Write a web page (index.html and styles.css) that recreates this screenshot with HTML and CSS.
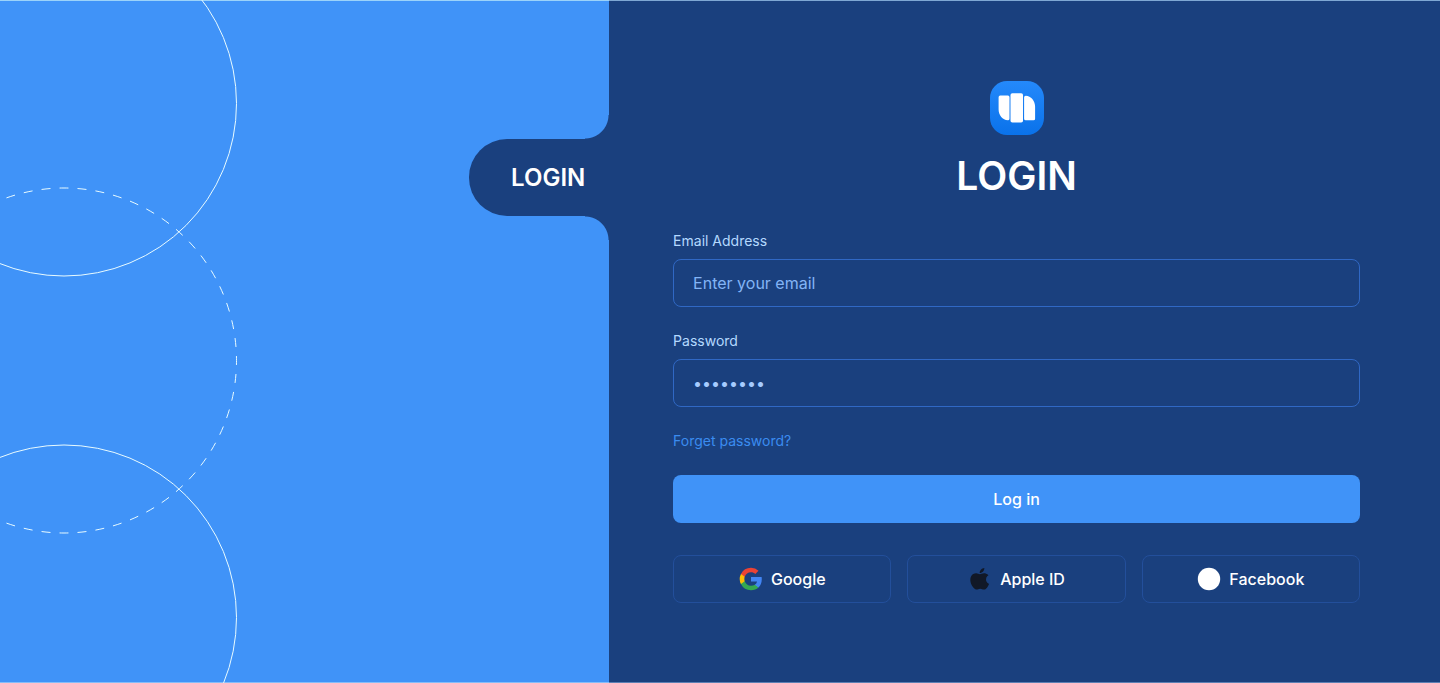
FILE: index.html
```html
<!DOCTYPE html>
<html lang="en">
<head>
  <meta charset="utf-8">
  <meta name="viewport" content="width=device-width, initial-scale=1">
  <title>Login</title>
  <link rel="stylesheet" href="styles.css">
</head>
<body>
  <div class="page">
    <aside class="art">
      <svg class="rings" viewBox="0 0 240 683" aria-hidden="true">
        <circle cx="64" cy="103.5" r="172.5"/>
        <circle cx="64" cy="360.5" r="172.5" pathLength="120" stroke-dasharray="1 1" stroke-dashoffset="0.5"/>
        <circle cx="64" cy="617.5" r="172.5"/>
      </svg>
      <div class="tab">LOGIN</div>
    </aside>
    <main class="panel">
      <header class="brand">
        <svg class="logo" viewBox="0 0 54 54" aria-hidden="true">
          <defs>
            <linearGradient id="tile" x1="0" y1="0" x2="0" y2="1">
              <stop offset="0" stop-color="#2489fb"/>
              <stop offset="1" stop-color="#0a72ea"/>
            </linearGradient>
          </defs>
          <rect width="54" height="54" rx="17" fill="url(#tile)"/>
          <path fill="#fff" d="M10.2 14.600h7.700a1.600 1.600 0 0 1 1.600 1.600v21.500a1.600 1.600 0 0 1-1.600 1.600C12.500 38.900 8.600 34.300 8.600 28.500V16.200a1.600 1.600 0 0 1 1.600-1.600z"/>
          <rect x="20.500" y="12.300" width="12.500" height="29.200" rx="1.800" fill="#fff"/>
          <path fill="#fff" d="M35.700 14.700c5.300.4 9.400 5 9.400 10.800v12.200a1.600 1.600 0 0 1-1.600 1.600h-7.800a1.600 1.600 0 0 1-1.600-1.600V16.300a1.600 1.600 0 0 1 1.600-1.600z"/>
        </svg>
        <h1 class="title">LOGIN</h1>
      </header>
      <form class="form">
        <div class="field">
          <label class="label" for="email">Email Address</label>
          <input class="input" id="email" type="email" placeholder="Enter your email">
        </div>
        <div class="field">
          <label class="label" for="password">Password</label>
          <input class="input input-password" id="password" type="password" placeholder="••••••••">
        </div>
        <a class="forgot" href="#">Forget password?</a>
        <button class="submit" type="submit">Log in</button>
        <div class="providers">
          <button class="provider" type="button">
            <svg class="icon" viewBox="-0.8 -0.8 25.6 25.6" aria-hidden="true">
              <path fill="#4285f4" d="M23.500 12.270c0-.82-.07-1.600-.2-2.360H12v4.650h6.450a5.520 5.520 0 0 1-2.390 3.620v3h3.870c2.260-2.090 3.570-5.160 3.570-8.910z"/>
              <path fill="#34a853" d="M12 24c3.240 0 5.950-1.070 7.930-2.910l-3.870-3c-1.070.72-2.440 1.150-4.060 1.150-3.130 0-5.780-2.110-6.720-4.950H1.280v3.100A11.990 11.990 0 0 0 12 24z"/>
              <path fill="#fbbc05" d="M5.280 14.290a7.200 7.200 0 0 1 0-4.580v-3.100h-4a12 12 0 0 0 0 10.780l4-3.100z"/>
              <path fill="#ea4335" d="M12 4.760c1.760 0 3.340.61 4.590 1.800l3.430-3.440A11.520 11.520 0 0 0 12 0 11.990 11.990 0 0 0 1.280 6.610l4 3.100C6.220 6.870 8.870 4.760 12 4.760z"/>
            </svg>
            Google
          </button>
          <button class="provider" type="button">
            <svg class="icon" viewBox="0 0 24 24" aria-hidden="true">
              <path fill="#111827" d="M12.152 6.896c-.948 0-2.415-1.078-3.960-1.040-2.040.027-3.910 1.183-4.961 3.014-2.117 3.675-.546 9.103 1.519 12.090 1.013 1.454 2.208 3.090 3.792 3.039 1.520-.065 2.090-.987 3.935-.987 1.831 0 2.350.987 3.960.948 1.637-.026 2.676-1.480 3.676-2.948 1.156-1.688 1.636-3.325 1.662-3.415-.039-.013-3.182-1.221-3.220-4.857-.026-3.040 2.480-4.494 2.597-4.559-1.429-2.090-3.623-2.324-4.390-2.376-2-.156-3.675 1.090-4.610 1.090zM15.530 3.830c.843-1.012 1.400-2.427 1.245-3.830-1.207.052-2.662.805-3.532 1.818-.78.896-1.454 2.338-1.273 3.714 1.338.104 2.715-.688 3.559-1.701" transform="translate(.2 1) scale(.96 .9)"/>
            </svg>
            Apple ID
          </button>
          <button class="provider" type="button">
            <svg class="icon" viewBox="0 0 24 24" aria-hidden="true">
              <circle cx="12" cy="12" r="11.200" fill="#fff"/>
            </svg>
            Facebook
          </button>
        </div>
      </form>
    </main>
  </div>
</body>
</html>
```
FILE: styles.css
```css
:root {
  --sky: #4093f8;
  --navy: #1a407e;
}

* {
  box-sizing: border-box;
}

body {
  margin: 0;
  background: var(--navy);
  color: #fff;
  font-family: Inter, "Liberation Sans", sans-serif;
}

.page {
  display: flex;
  min-height: 100vh;
  box-shadow: inset 0 1px #7fa8d4, inset 0 -1px #5c80b4;
}

.art {
  position: relative;
  flex: 0 0 42.3%;
  display: flex;
  flex-direction: column;
  align-items: flex-end;
  overflow: hidden;
  padding-top: 139px;
  background: var(--sky);
  box-shadow: inset 0 1px #9cd3fa, inset 0 -1px #86bdf8;
}

.rings {
  position: absolute;
  top: 0;
  left: 0;
  width: 240px;
  height: 683px;
  fill: none;
  stroke: #e8fbff;
  stroke-width: 1;
}

.tab {
  position: relative;
  width: 140px;
  padding: 24px 24px 24px 42px;
  border-radius: 38px 0 0 38px;
  background: var(--navy);
  font-size: 24px;
  font-weight: 600;
  line-height: 29px;
}

/* Concave corners joining the tab to the panel */
.tab::before,
.tab::after {
  content: "";
  position: absolute;
  right: 0;
  width: 24px;
  height: 24px;
}

.tab::before {
  bottom: 100%;
  background: radial-gradient(circle at 0 0, transparent 23px, var(--navy) 24px);
}

.tab::after {
  top: 100%;
  background: radial-gradient(circle at 0 100%, transparent 23px, var(--navy) 24px);
}

.panel {
  flex: 1;
  padding: 81px 80px 80px 64px;
}

.brand {
  display: flex;
  flex-direction: column;
  align-items: center;
  gap: 16px;
}

.logo {
  width: 54px;
  height: 54px;
}

.title {
  margin: 0;
  font-size: 39px;
  font-weight: 600;
  line-height: 50px;
}

.form {
  display: flex;
  flex-direction: column;
  padding-top: 32px;
}

.field {
  display: flex;
  flex-direction: column;
  gap: 10px;
  margin-bottom: 26px;
}

.label,
.forgot {
  font-size: 14px;
  line-height: 16px;
}

.label {
  color: #b4d9ff;
}

.input {
  height: 48px;
  padding: 0 19px;
  border: 1px solid #3068c4;
  border-radius: 8px;
  background: transparent;
  color: #a6ccff;
  font: inherit;
  font-size: 16px;
}

.input::placeholder {
  color: #83b4f6;
  opacity: 1;
}

.input-password::placeholder {
  color: #a6ccff;
}

.forgot {
  align-self: flex-start;
  color: #3b8cf0;
  text-decoration: none;
}

.submit,
.provider {
  height: 48px;
  border-radius: 8px;
  color: #fff;
  font: inherit;
  font-size: 16px;
  font-weight: 500;
}

.submit {
  margin: 26px 0 32px;
  border: 0;
  background: var(--sky);
}

.providers {
  display: grid;
  grid-template-columns: repeat(3, 1fr);
  gap: 16px;
}

.provider {
  display: flex;
  align-items: center;
  justify-content: center;
  gap: 8px;
  border: 1px solid #234f9b;
  background: transparent;
}

.icon {
  width: 24px;
  height: 24px;
}
```
